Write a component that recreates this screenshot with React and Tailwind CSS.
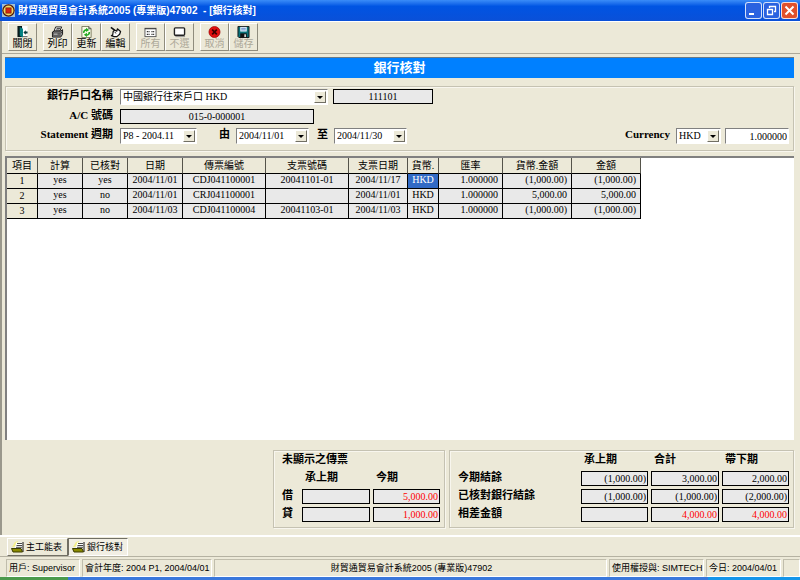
import React from "react";

const SERIF = "font-['Liberation_Serif','Noto_Sans_CJK_TC',serif]";

/* ---------- Icons ---------- */

function AppIcon() {
  return (
    <svg viewBox="0 0 13 13" className="h-[13px] w-[13px] shrink-0">
      <rect width="13" height="13" fill="#9fc0d8" />
      <circle cx="6.5" cy="6.5" r="6.2" fill="#4a1408" />
      <circle cx="6.5" cy="6.5" r="5" fill="#f6d860" />
      <rect x="3.5" y="3.5" width="6" height="6" fill="#7a1508" />
      <rect x="4.2" y="4.2" width="4.6" height="4.6" fill="#d42410" />
    </svg>
  );
}

function DoorIcon() {
  return (
    <svg viewBox="0 0 13 13" className="h-[13px] w-[13px]">
      <path d="M1 0h11v12H1z" fill="#fff" />
      <path d="M1 0h5v12H1z" fill="#0a1a1a" />
      <path d="M3.500 1L7 3v9.500l-3.500-2z" fill="#008080" />
      <path d="M7.500 7l2.500-2.500V6h2v2h-2v1.500z" fill="#0a3a3a" />
      <path d="M7 11.500h5" stroke="#555" />
    </svg>
  );
}

function PrinterIcon() {
  return (
    <svg viewBox="0 0 13 13" className="h-[13px] w-[13px]">
      <path d="M4.500 1h6.500l-2 4.500H2.800z" fill="#fff" stroke="#111" />
      <path d="M5.500 2.700h4M4.800 4.200h4" stroke="#111" strokeWidth=".8" />
      <path d="M1 6.500l2-1h7L12 4v5l-2 3H1z" fill="#909090" stroke="#111" />
      <path d="M1.500 7.700h8.500l2-2M1.500 9.800h8.500" fill="none" stroke="#222" strokeWidth=".9" />
      <path d="M2.500 8.800h4" stroke="#eee" strokeWidth=".8" />
    </svg>
  );
}

function RefreshIcon() {
  return (
    <svg viewBox="0 0 13 13" className="h-[13px] w-[13px]">
      <path d="M1.500.5H9L11.500 3v9.500h-10z" fill="#fbfbe8" stroke="#77775a" />
      <path d="M9 .5V3h2.500" fill="none" stroke="#444" />
      <path d="M3.600 7.500c-.3-2 1-3.300 3-3.300" fill="none" stroke="#22a822" strokeWidth="1.800" />
      <path d="M6 1.800l3.400 2.600L6 6.600z" fill="#22a822" />
      <path d="M9.500 6.500c.3 2-1 3.300-3 3.300" fill="none" stroke="#22a822" strokeWidth="1.800" />
      <path d="M7 12L3.600 9.600 7 7.400z" fill="#22a822" />
    </svg>
  );
}

function EditIcon() {
  return (
    <svg viewBox="0 0 13 13" className="h-[13px] w-[13px]">
      <path d="M1.500 1.500l4 3" stroke="#111" strokeWidth="1.800" />
      <path d="M4 6l1.500-1.500L8 5.500 8.500 3l3.500 3-1 3-3 2.500H5L2 10.500l1.500-1z" fill="#fff" stroke="#111" strokeWidth="1.300" strokeLinejoin="round" />
      <path d="M5.500 6.800l1.800 1" stroke="#111" />
    </svg>
  );
}

function AllIcon() {
  return (
    <svg viewBox="0 0 13 13" className="h-[13px] w-[13px]">
      <rect x=".5" y="2.500" width="12" height="9" fill="#fff" stroke="#555" />
      <path d="M.5 3h12" stroke="#333" />
      <path d="M2.500 6h3M7.500 6h3M2.500 9h3M7.500 9h3" stroke="#333" strokeWidth="1.400" strokeDasharray="1.300 .5" />
    </svg>
  );
}

function NoneIcon() {
  return (
    <svg viewBox="0 0 13 13" className="h-[13px] w-[13px]">
      <rect x="1" y="2" width="11" height="8" rx="1" fill="#fff" stroke="#222" strokeWidth="1.500" />
      <path d="M2 11.500h10.500" stroke="#888" />
    </svg>
  );
}

function CancelIcon() {
  return (
    <svg viewBox="0 0 13 13" className="h-[13px] w-[13px]">
      <circle cx="6.500" cy="6.500" r="6" fill="#e01010" stroke="#a00808" strokeWidth=".8" />
      <path d="M4 4l5 5M9 4L4 9" stroke="#3a0000" strokeWidth="1.800" />
    </svg>
  );
}

function SaveIcon() {
  return (
    <svg viewBox="0 0 13 13" className="h-[13px] w-[13px]">
      <path d="M.5.5h12v12h-11l-1-1z" fill="#087078" stroke="#111" />
      <rect x="3" y="1" width="7" height="5" fill="#e8f4ff" />
      <path d="M4 2.500h5M4 4.200h5" stroke="#3a62b0" strokeWidth=".8" />
      <rect x="3" y="8" width="7" height="4.500" fill="#111" />
      <rect x="7.500" y="9" width="1.500" height="3" fill="#fff" />
    </svg>
  );
}

function FolderIcon() {
  return (
    <svg viewBox="0 0 13 12" className="h-3 w-[13px] shrink-0">
      <path d="M4 1l3-1v2L3 6H1z" fill="#f4f08a" />
      <path d="M5 1.500h6.500V8H4z" fill="#fff" />
      <path d="M6 2.500h5M5.500 4.500h5.500M5 6.300h6" stroke="#333" strokeWidth=".9" />
      <path d="M12 1v10" stroke="#111" />
      <path d="M.5 7.500H10l1.500 3.500H2z" fill="#8a8a00" stroke="#3c3c00" />
    </svg>
  );
}

/* ---------- Controls ---------- */

function CaptionButton({ label, className, children }) {
  return (
    <button
      type="button"
      aria-label={label}
      className={`flex h-[17px] w-[17px] items-center justify-center rounded-[3px] border border-white/80 ${className}`}
    >
      <svg viewBox="0 0 15 15" className="h-[15px] w-[15px]" fill="none" stroke="#fff">
        {children}
      </svg>
    </button>
  );
}

function ToolButton({ label, icon, disabled }) {
  return (
    <button
      type="button"
      disabled={disabled}
      className={`flex h-7 w-[29px] flex-col items-center border border-t-white border-r-[#8f8c7d] border-b-[#8f8c7d] border-l-white pt-[2px] text-[10px] leading-[12px] ${
        disabled ? "text-[#aca899]" : "text-black"
      }`}
    >
      {icon}
      {label}
    </button>
  );
}

function Dropdown({ id, label, value, className }) {
  return (
    <span className={`relative block h-4 ${className}`}>
      <select
        id={id}
        aria-label={label}
        className="block h-4 w-full appearance-none border border-t-[#808080] border-r-white border-b-white border-l-[#808080] bg-white pl-[2px] text-[10px] leading-[14px]"
      >
        <option>{value}</option>
      </select>
      <span className="pointer-events-none absolute top-[2px] right-[2px] flex h-3 w-3 items-center justify-center border border-t-white border-r-[#716f64] border-b-[#716f64] border-l-white bg-[#ece9d8]">
        <svg viewBox="0 0 6 3" className="h-[3px] w-[6px]">
          <path d="M0 0h6L3 3z" fill="#000" />
        </svg>
      </span>
    </span>
  );
}

function ReadBox({ value = "", label, id, className = "" }) {
  return (
    <input
      id={id}
      aria-label={label}
      readOnly
      value={value}
      className={`block h-[15px] min-w-0 border border-black bg-[#e9e9e9] px-px text-[10px] leading-[13px] ${className}`}
    />
  );
}

function Group({ className = "", children }) {
  return (
    <section className={`border border-[#c5c2b2] shadow-[inset_1px_1px_0_#f8f6ee,1px_1px_0_#f8f6ee] ${className}`}>
      {children}
    </section>
  );
}

/* ---------- Data ---------- */

const columns = [
  { title: "項目", width: "w-[31px]", align: "text-center" },
  { title: "計算", width: "w-[45px]", align: "text-center" },
  { title: "已核對", width: "w-[45px]", align: "text-center" },
  { title: "日期", width: "w-[55px]", align: "text-center" },
  { title: "傳票編號", width: "w-[83px]", align: "text-center" },
  { title: "支票號碼", width: "w-[83px]", align: "text-center" },
  { title: "支票日期", width: "w-[59px]", align: "text-center" },
  { title: "貨幣.", width: "w-[31px]", align: "text-center" },
  { title: "匯率", width: "w-[64px]", align: "text-right" },
  { title: "貨幣.金額", width: "w-[69px]", align: "text-right" },
  { title: "金額", width: "w-[69px]", align: "text-right" },
];

const rows = [
  ["1", "yes", "yes", "2004/11/01", "CDJ041100001", "20041101-01", "2004/11/17", "HKD", "1.000000", "(1,000.00)", "(1,000.00)"],
  ["2", "yes", "no", "2004/11/01", "CRJ041100001", "", "2004/11/01", "HKD", "1.000000", "5,000.00", "5,000.00"],
  ["3", "yes", "no", "2004/11/03", "CDJ041100004", "20041103-01", "2004/11/03", "HKD", "1.000000", "(1,000.00)", "(1,000.00)"],
];

const hidden = [
  { label: "借", values: ["", "5,000.00"] },
  { label: "貸", values: ["", "1,000.00"] },
];

const balances = [
  { label: "今期結餘", values: ["(1,000.00)", "3,000.00", "2,000.00"] },
  { label: "已核對銀行結餘", values: ["(1,000.00)", "(1,000.00)", "(2,000.00)"] },
  { label: "相差金額", values: ["", "4,000.00", "4,000.00"], alert: true },
];

/* ---------- Sections ---------- */

function TitleBar() {
  return (
    <header className="flex h-[21px] items-center bg-linear-to-b from-[#3a8cf8] via-[#0054e3] via-30% to-[#0a50d8] pr-[2px] pl-[2px]">
      <AppIcon />
      <h1 className="ml-[3px] flex-1 text-[10px] leading-[14px] font-bold whitespace-pre text-white">
        {"財貿通貿易會計系統2005 (專業版)47902  - [銀行核對]"}
      </h1>
      <div className="flex gap-px">
        <CaptionButton label="最小化" className="bg-[#2a62e0]">
          <path d="M3 11h5" strokeWidth="2" />
        </CaptionButton>
        <CaptionButton label="還原" className="bg-[#2a62e0]">
          <path d="M5.500 5V3.500h6v5H10M3.500 6.500h5v5h-5zM5.500 3.500h6M3.500 6.500h5" strokeWidth="1.300" />
        </CaptionButton>
        <CaptionButton label="關閉視窗" className="bg-[#e0502c]">
          <path d="M3.500 3.500l8 8M11.500 3.500l-8 8" strokeWidth="2" />
        </CaptionButton>
      </div>
    </header>
  );
}

function Toolbar() {
  return (
    <div className="flex h-[33px] gap-[6px] border-t border-b border-t-white border-b-[#aca899] pt-px pl-[6px]">
      <ToolButton label="關閉" icon={<DoorIcon />} />
      <div className="flex">
        <ToolButton label="列印" icon={<PrinterIcon />} />
        <ToolButton label="更新" icon={<RefreshIcon />} />
        <ToolButton label="編輯" icon={<EditIcon />} />
      </div>
      <div className="flex">
        <ToolButton label="所有" icon={<AllIcon />} disabled />
        <ToolButton label="不選" icon={<NoneIcon />} disabled />
      </div>
      <div className="flex">
        <ToolButton label="取消" icon={<CancelIcon />} disabled />
        <ToolButton label="儲存" icon={<SaveIcon />} disabled />
      </div>
    </div>
  );
}

function AccountForm() {
  const label = "w-[103px] text-right text-[11px] leading-[13px] font-bold";
  return (
    <Group className="mt-2 flex flex-col gap-1 px-1 pt-[2px] pb-[6px]">
      <div className="flex">
        <label htmlFor="account" className={label}>銀行戶口名稱</label>
        <Dropdown id="account" value="中國銀行往來戶口 HKD" className="ml-[7px] w-[208px]" />
        <ReadBox label="戶口編號" value="111101" className="ml-[5px] w-[100px] text-center" />
      </div>
      <div className="flex">
        <label htmlFor="acno" className={label}>A/C 號碼</label>
        <ReadBox id="acno" value="015-0-000001" className="ml-[7px] w-[194px] text-center" />
      </div>
      <div className="flex">
        <label htmlFor="period" className={label}>Statement 週期</label>
        <Dropdown id="period" value="P8 - 2004.11" className="ml-[7px] w-[77px]" />
        <label htmlFor="from" className="ml-[22px] text-[11px] leading-[13px] font-bold">由</label>
        <Dropdown id="from" value="2004/11/01" className="ml-[6px] w-[73px]" />
        <label htmlFor="to" className="ml-2 text-[11px] leading-[13px] font-bold">至</label>
        <Dropdown id="to" value="2004/11/30" className="ml-[6px] w-[73px]" />
        <div className="flex-1" />
        <label htmlFor="currency" className="text-[11px] leading-[13px] font-bold">Currency</label>
        <Dropdown id="currency" value="HKD" className="ml-[6px] w-[45px]" />
        <input
          aria-label="Currency rate"
          defaultValue="1.000000"
          className="ml-1 block h-4 w-[64px] border border-t-[#808080] border-r-white border-b-white border-l-[#808080] bg-white px-px text-right text-[10px] leading-[14px]"
        />
      </div>
    </Group>
  );
}

function VoucherTable() {
  return (
    <div className="mt-[5px] flex-1 border-t-2 border-l-2 border-t-[#808080] border-l-[#808080] bg-white">
      <table className="table-fixed border-separate border-spacing-0 text-[10px]">
        <thead>
          <tr>
            {columns.map((c) => (
              <th
                key={c.title}
                scope="col"
                className={`h-4 ${c.width} overflow-hidden border-r border-b border-r-[#55534a] border-b-black bg-[#ece9d8] p-0 text-center leading-[15px] font-normal whitespace-nowrap`}
              >
                {c.title}
              </th>
            ))}
          </tr>
        </thead>
        <tbody>
          {rows.map((row, r) => (
            <tr key={row[0]}>
              {row.map((cell, i) => (
                <td
                  key={columns[i].title}
                  className={`h-[15px] border-r border-b border-black py-0 align-top whitespace-nowrap ${columns[i].align} ${
                    i === 0 ? "leading-[14px]" : "leading-[12px]"
                  } ${columns[i].align === "text-right" ? "pr-1 pl-0" : "px-0"} ${
                    i === 7 && r === 0 ? "bg-[#316ac5] text-white" : i === 0 ? "bg-[#ece9d8]" : "bg-[#e9e9e9]"
                  }`}
                >
                  {cell}
                </td>
              ))}
            </tr>
          ))}
        </tbody>
      </table>
    </div>
  );
}

function Totals() {
  const box = "text-right font-normal";
  return (
    <div className="mt-[10px] flex justify-end gap-1 text-[11px] leading-[12px] font-bold">
      <Group className="grid grid-cols-[17px_68px_67px] grid-rows-[repeat(4,15px)] gap-[3px] pt-[2px] pr-1 pb-[5px] pl-2">
        <h2 className="col-span-3">未顯示之傳票</h2>
        <span />
        <span className="pl-[3px]">承上期</span>
        <span className="pl-[3px]">今期</span>
        {hidden.map((row) => (
          <React.Fragment key={row.label}>
            <span>{row.label}</span>
            {row.values.map((v, i) => (
              <ReadBox key={i} label={`${row.label} ${i ? "今期" : "承上期"}`} value={v} className={`${box} text-[#ff0000]`} />
            ))}
          </React.Fragment>
        ))}
      </Group>
      <Group className="grid grid-cols-[120px_67px_68px_67px] grid-rows-[repeat(4,15px)] gap-[3px] pt-[2px] pr-1 pb-[5px] pl-2">
        <span />
        <span className="pl-[3px]">承上期</span>
        <span className="pl-[3px]">合計</span>
        <span className="pl-[3px]">帶下期</span>
        {balances.map((row) => (
          <React.Fragment key={row.label}>
            <span>{row.label}</span>
            {row.values.map((v, i) => (
              <ReadBox
                key={i}
                label={`${row.label} ${["承上期", "合計", "帶下期"][i]}`}
                value={v}
                className={`${box} ${row.alert ? "text-[#ff0000]" : "text-black"}`}
              />
            ))}
          </React.Fragment>
        ))}
      </Group>
    </div>
  );
}

function WindowTabs() {
  const base = "flex h-[18px] items-center gap-[2px] border pl-[3px] text-[9px] leading-[14px] whitespace-nowrap";
  return (
    <nav className="flex h-[21px] border-t-2 border-white pt-px pl-[7px]">
      <button type="button" className={`${base} w-[61px] border-t-white border-r-[#716f64] border-b-[#716f64] border-l-white`}>
        <FolderIcon />
        主工能表
      </button>
      <button type="button" className={`${base} w-[60px] border-t-[#716f64] border-r-white border-b-white border-l-[#716f64] bg-[#f2efe4]`}>
        <FolderIcon />
        銀行核對
      </button>
    </nav>
  );
}

function StatusBar() {
  const cell = "flex items-center border border-t-[#c0bdac] border-r-white border-b-white border-l-[#c0bdac] pl-[2px]";
  return (
    <footer className="flex h-[21px] gap-[2px] border-t border-[#b5b2a2] pt-[2px] pl-[6px] text-[9px] leading-[14px] whitespace-nowrap">
      <div className={`${cell} w-[74px]`}>用戶: Supervisor</div>
      <div className={`${cell} w-[130px]`}>會計年度: 2004 P1, 2004/04/01</div>
      <div className={`${cell} flex-1 justify-center`}>財貿通貿易會計系統2005 (專業版)47902</div>
      <div className={`${cell} w-[95px]`}>使用權授與: SIMTECH</div>
      <div className={`${cell} w-[75px]`}>今日: 2004/04/01</div>
      <div className={`${cell} w-[17px]`} />
    </footer>
  );
}

export default function App() {
  return (
    <div className="flex min-h-screen flex-col bg-[#ece9d8] font-['Liberation_Sans','Noto_Sans_CJK_TC',sans-serif] text-black">
      <TitleBar />
      <div className="flex flex-1 flex-col border-l-2 border-[#9a988c]">
        <Toolbar />
        <main className={`flex flex-1 flex-col pt-[3px] pr-[6px] pb-[7px] pl-[3px] ${SERIF}`}>
          <h2 className="border-t border-[#6a7a86] bg-[#0080ff] text-center text-[13px] leading-[20px] font-bold text-white">
            銀行核對
          </h2>
          <AccountForm />
          <VoucherTable />
          <Totals />
        </main>
      </div>
      <WindowTabs />
      <StatusBar />
      <div className="flex h-[3px]">
        <div className="w-[68px] bg-[#4c9a4c]" />
        <div className="flex-1 bg-[#3a78dc]" />
        <div className="w-[92px] bg-[#1596ea]" />
      </div>
    </div>
  );
}
